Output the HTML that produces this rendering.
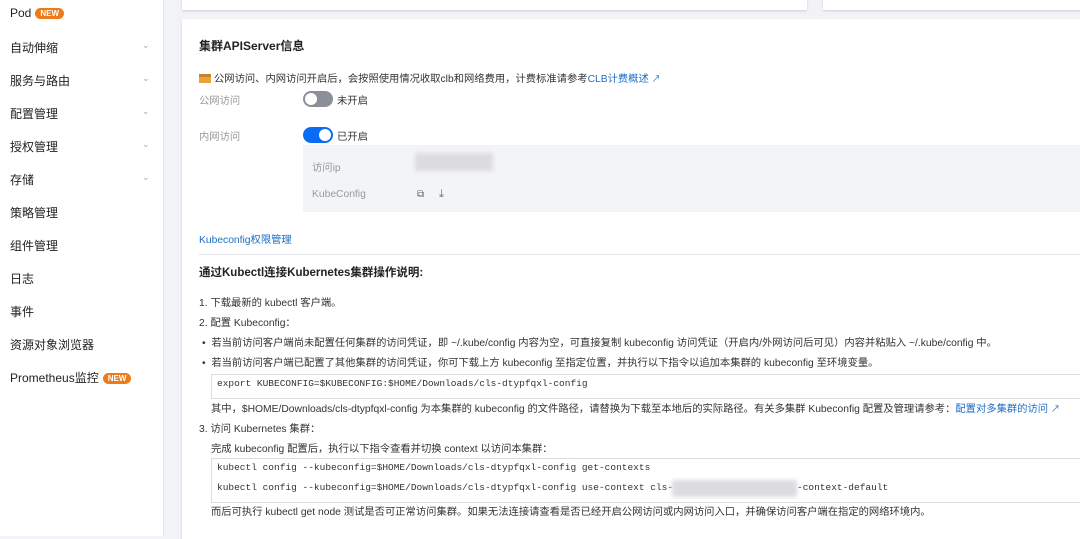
<!DOCTYPE html>
<html><head><meta charset="utf-8"><style>
*{margin:0;padding:0;box-sizing:border-box}
body{width:1080px;height:536px;overflow:hidden;background:#f2f3f7;font-family:"Liberation Sans","Noto Sans CJK SC",sans-serif;color:#333;position:relative}
.a{position:absolute;white-space:nowrap}
.side{position:absolute;left:0;top:0;width:164px;height:536px;background:#fff;border-right:1px solid #e5e6ea}
.si{position:absolute;left:10px;font-size:12px;color:#222}
.ch{position:absolute;left:142px;font-size:9px;color:#aaa}
.new{display:inline-block;background:#ed7b1c;color:#fff;font-size:8px;font-weight:bold;border-radius:8px;padding:1px 5px;margin-left:4px;vertical-align:1px}
.card{position:absolute;background:#fff;box-shadow:0 1px 2px rgba(0,0,0,.15)}
.t{font-size:10.3px;color:#333}
.g{font-size:10.3px;color:#999}
.mono{font-family:"Liberation Mono",monospace;font-size:9.5px;color:#333}
.code{position:absolute;left:211px;width:880px;border:1px solid #dcdde2;background:#fff}
.sw{position:absolute;width:30px;height:16px;border-radius:8px}
.sw i{position:absolute;top:2px;width:12px;height:12px;border-radius:6px;background:#fff}
.blue{color:#1f6fc4}
</style></head><body>
<div class="side">
<div class="si" style="top:6px">Pod<span class="new">NEW</span></div>
<div class="si" style="top:39px">自动伸缩</div><div class="ch" style="top:40px">⌄</div>
<div class="si" style="top:72px">服务与路由</div><div class="ch" style="top:73px">⌄</div>
<div class="si" style="top:105px">配置管理</div><div class="ch" style="top:106px">⌄</div>
<div class="si" style="top:138px">授权管理</div><div class="ch" style="top:139px">⌄</div>
<div class="si" style="top:171px">存储</div><div class="ch" style="top:172px">⌄</div>
<div class="si" style="top:204px">策略管理</div>
<div class="si" style="top:237px">组件管理</div>
<div class="si" style="top:270px">日志</div>
<div class="si" style="top:303px">事件</div>
<div class="si" style="top:336px">资源对象浏览器</div>
<div class="si" style="top:369px">Prometheus监控<span class="new">NEW</span></div>
</div>
<div class="card" style="left:182px;top:-4px;width:625px;height:14px"></div>
<div class="card" style="left:823px;top:-4px;width:260px;height:14px"></div>
<div class="card" style="left:182px;top:19px;width:900px;height:520px"></div>

<div class="a" style="left:199px;top:37px;font-size:12px;font-weight:bold;color:#222">集群APIServer信息</div>
<div class="a t" style="left:199px;top:70px"><span style="display:inline-block;width:12px;height:9px;background:#e8a43a;vertical-align:-1px;margin-right:3px;border-top:3px solid #c9822a"></span>公网访问、内网访问开启后，会按照使用情况收取clb和网络费用，计费标准请参考<span class="blue">CLB计费概述</span> <span class="blue" style="font-size:9px">↗</span></div>
<div class="a g" style="left:199px;top:92px">公网访问</div>
<div class="sw" style="left:303px;top:91px;background:#8a8f99"><i style="left:2px"></i></div>
<div class="a t" style="left:337px;top:92px">未开启</div>
<div class="a g" style="left:199px;top:128px">内网访问</div>
<div class="sw" style="left:303px;top:127px;background:#0a6cf5"><i style="left:16px"></i></div>
<div class="a t" style="left:337px;top:128px">已开启</div>
<div class="a" style="left:303px;top:145px;width:780px;height:67px;background:#f3f4f8"></div>
<div class="a g" style="left:312px;top:159px">访问ip</div>
<div class="a" style="left:415px;top:153px;width:78px;height:18px;background:#dcdcdf;filter:blur(2px)"></div>
<div class="a g" style="left:312px;top:189px">KubeConfig</div>
<div class="a" style="left:417px;top:189px;font-size:10px;color:#666">⧉</div>
<div class="a" style="left:439px;top:188px;font-size:11px;color:#666">⤓</div>
<div class="a blue" style="left:199px;top:231px;font-size:10.3px">Kubeconfig权限管理</div>
<div class="a" style="left:199px;top:254px;width:890px;height:1px;background:#e3e4e8"></div>
<div class="a" style="left:199px;top:264px;font-size:11.5px;font-weight:bold;color:#222">通过Kubectl连接Kubernetes集群操作说明:</div>
<div class="a t" style="left:199px;top:294px">1. 下载最新的 kubectl 客户端。</div>
<div class="a t" style="left:199px;top:314px">2. 配置 Kubeconfig：</div>
<div class="a t" style="left:202px;top:334px">•&nbsp; 若当前访问客户端尚未配置任何集群的访问凭证，即 ~/.kube/config 内容为空，可直接复制 kubeconfig 访问凭证（开启内/外网访问后可见）内容并粘贴入 ~/.kube/config 中。</div>
<div class="a t" style="left:202px;top:354px">•&nbsp; 若当前访问客户端已配置了其他集群的访问凭证，你可下载上方 kubeconfig 至指定位置，并执行以下指令以追加本集群的 kubeconfig 至环境变量。</div>
<div class="code" style="top:374px;height:25px"></div>
<div class="a mono" style="left:217px;top:378px">export KUBECONFIG=$KUBECONFIG:$HOME/Downloads/cls-dtypfqxl-config</div>
<div class="a t" style="left:211px;top:400px">其中，$HOME/Downloads/cls-dtypfqxl-config 为本集群的 kubeconfig 的文件路径，请替换为下载至本地后的实际路径。有关多集群 Kubeconfig 配置及管理请参考：<span class="blue">配置对多集群的访问</span> <span class="blue" style="font-size:9px">↗</span></div>
<div class="a t" style="left:199px;top:420px">3. 访问 Kubernetes 集群：</div>
<div class="a t" style="left:211px;top:440px">完成 kubeconfig 配置后，执行以下指令查看并切换 context 以访问本集群：</div>
<div class="code" style="top:458px;height:45px"></div>
<div class="a mono" style="left:217px;top:462px">kubectl config --kubeconfig=$HOME/Downloads/cls-dtypfqxl-config get-contexts</div>
<div class="a mono" style="left:217px;top:482px">kubectl config --kubeconfig=$HOME/Downloads/cls-dtypfqxl-config use-context cls-</div>
<div class="a" style="left:672px;top:480px;width:125px;height:17px;background:#dcdcdf;filter:blur(2px)"></div>
<div class="a mono" style="left:797px;top:482px">-context-default</div>
<div class="a t" style="left:211px;top:503px">而后可执行 kubectl get node 测试是否可正常访问集群。如果无法连接请查看是否已经开启公网访问或内网访问入口，并确保访问客户端在指定的网络环境内。</div>
</body></html>
